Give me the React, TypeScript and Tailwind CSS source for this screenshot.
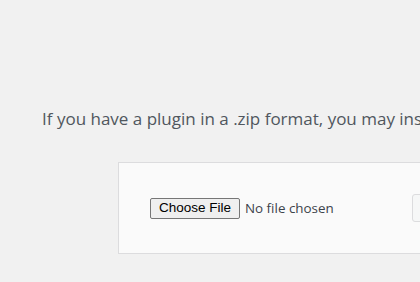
import React from "react";

export default function App() {
  return (
    <div className="h-[282px] w-[420px] overflow-hidden bg-[#f1f1f1]">
      <div className="pt-[107px]">
        <p className="whitespace-nowrap pl-[42px] text-[17px] leading-6 text-[#50575e] [font-family:'Open_Sans','Noto_Sans',sans-serif]">
          If you have a plugin in a .zip format, you may install or update it by uploading it here.
        </p>
        <div className="ml-[118px] mt-[31px] flex h-[92px] w-[500px] items-center border border-[#dcdcde] bg-[#fafafa] pl-[31px]">
          <div className="flex w-[262px] items-center">
            <button className="h-[21px] w-[90px] rounded-[2px] border border-[#767676] bg-[#efefef] text-[13.5px] leading-none text-black [font-family:'Liberation_Sans',Arial,sans-serif]">
              Choose File
            </button>
            <span className="ml-[5px] text-[13.4px] text-[#3c434a] [font-family:'Open_Sans','Noto_Sans',sans-serif]">
              No file chosen
            </span>
          </div>
          <button className="h-[28px] rounded-[3px] border border-[#dcdcde] bg-[#f6f7f7] px-[10px] text-[13px] text-[#a7aaad] [font-family:'Open_Sans',sans-serif]">
            Install Now
          </button>
        </div>
      </div>
    </div>
  );
}
